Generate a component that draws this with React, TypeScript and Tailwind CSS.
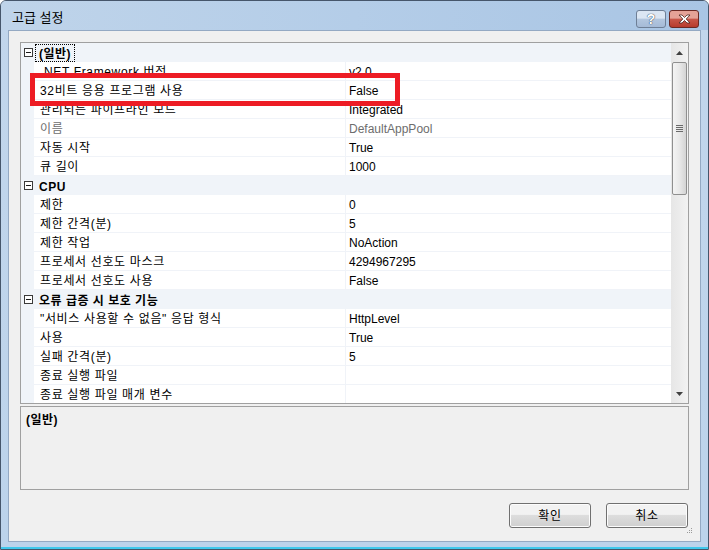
import React from 'react';

type Row =
  | { kind: 'cat'; label: string; focus?: boolean }
  | { kind: 'item'; name: string; value: string; dim?: boolean };

const rows: Row[] = [
  { kind: 'cat', label: '(일반)', focus: true },
  { kind: 'item', name: '.NET Framework 버전', value: 'v2.0' },
  { kind: 'item', name: '32비트 응용 프로그램 사용', value: 'False' },
  { kind: 'item', name: '관리되는 파이프라인 모드', value: 'Integrated' },
  { kind: 'item', name: '이름', value: 'DefaultAppPool', dim: true },
  { kind: 'item', name: '자동 시작', value: 'True' },
  { kind: 'item', name: '큐 길이', value: '1000' },
  { kind: 'cat', label: 'CPU' },
  { kind: 'item', name: '제한', value: '0' },
  { kind: 'item', name: '제한 간격(분)', value: '5' },
  { kind: 'item', name: '제한 작업', value: 'NoAction' },
  { kind: 'item', name: '프로세서 선호도 마스크', value: '4294967295' },
  { kind: 'item', name: '프로세서 선호도 사용', value: 'False' },
  { kind: 'cat', label: '오류 급증 시 보호 기능' },
  { kind: 'item', name: '"서비스 사용할 수 없음" 응답 형식', value: 'HttpLevel' },
  { kind: 'item', name: '사용', value: 'True' },
  { kind: 'item', name: '실패 간격(분)', value: '5' },
  { kind: 'item', name: '종료 실행 파일', value: '' },
  { kind: 'item', name: '종료 실행 파일 매개 변수', value: '' },
];

function Minus() {
  return (
    <span className="w-[9px] h-[9px] border border-[#3b3b3b] bg-white flex items-center justify-center shrink-0">
      <span className="w-[5px] h-px bg-[#1a1a1a]" />
    </span>
  );
}

function GridRow({ row }: { row: Row }) {
  if (row.kind === 'cat') {
    return (
      <div className="h-[19px] shrink-0 flex items-center bg-[#f0f4f9]">
        <div className="w-[13px] flex justify-center pl-[2px]">
          <Minus />
        </div>
        <span
          className={
            'ml-[1px] h-[18px] px-[3px] pt-[1px] leading-[16px] font-bold tracking-[0.5px] border ' +
            (row.focus ? 'border-dotted border-black' : 'border-transparent')
          }
        >
          {row.label}
        </span>
      </div>
    );
  }
  return (
    <div className="h-[19px] shrink-0 flex">
      <div className="w-[13px] bg-[#f0f4f9]" />
      <div className="w-[312px] pl-[6px] pt-[2px] leading-[16px] tracking-[0.65px] border-b border-[#f0f3f8] border-r whitespace-nowrap overflow-hidden">
        <span className={row.dim ? 'text-[#6d6d6d]' : 'text-black'}>{row.name}</span>
      </div>
      <div className="flex-1 pl-[3px] pt-[2px] leading-[16px] border-b border-[#f0f3f8]">
        <span className={row.dim ? 'text-[#6d6d6d]' : 'text-black'}>{row.value}</span>
      </div>
    </div>
  );
}

function ScrollBar() {
  return (
    <div className="w-[17px] bg-gradient-to-r from-[#e6e6e6] to-[#f2f2f2] flex flex-col">
      <div className="h-[19px] flex items-center justify-center">
        <svg width="7" height="4" viewBox="0 0 7 4">
          <path d="M3.5 0 L7 4 L0 4 Z" fill="#404040" />
        </svg>
      </div>
      <div className="h-[133px] mx-[1px] rounded-[2px] border border-[#8f8f8f] bg-gradient-to-r from-[#f4f4f4] via-[#e8e8e8] to-[#d4d4d4] flex flex-col items-center justify-center gap-[1px]">
        <span className="w-[7px] h-px bg-[#6a6a6a]" />
        <span className="w-[7px] h-px bg-[#6a6a6a]" />
        <span className="w-[7px] h-px bg-[#6a6a6a]" />
        <span className="w-[7px] h-px bg-[#6a6a6a]" />
      </div>
      <div className="flex-1" />
      <div className="h-[19px] flex items-center justify-center">
        <svg width="7" height="4" viewBox="0 0 7 4">
          <path d="M0 0 L7 0 L3.5 4 Z" fill="#404040" />
        </svg>
      </div>
    </div>
  );
}

function DlgButton({ label }: { label: string }) {
  return (
    <button className="w-[82px] h-[25px] rounded-[3px] border border-[#707070] bg-gradient-to-b from-[#f2f2f2] from-45% via-[#dddddd] via-50% to-[#cfcfcf] text-[12px] tracking-[0.6px] text-black shadow-[inset_0_0_0_1px_#fcfcfc]">
      {label}
    </button>
  );
}

export default function App() {
  return (
    <div className="w-[709px] h-[550px] bg-white font-['Liberation_Sans','Noto_Sans_CJK_KR',sans-serif] text-[12px] text-black">
      <div className="relative w-full h-full flex flex-col rounded-t-[6px] border border-[#46566b] bg-gradient-to-b from-[#c2d6ec] to-[#bcd3eb] overflow-hidden">
        {/* title bar */}
        <div className="h-[29px] flex items-start justify-between pl-[11px] pr-[9px] bg-gradient-to-r from-[#bfd4ea] via-[#b4cde8] to-[#a9c5e4]">
          <span className="mt-[10px] text-[13px] leading-[14px] text-black">고급 설정</span>
          <div className="mt-[9px] flex gap-[3px]">
            <div className="w-[30px] h-[18px] rounded-[3px] border border-[#6e7f96] bg-gradient-to-b from-[#dbe6f3] from-45% via-[#b3c7df] via-50% to-[#a5bbd7] flex items-center justify-center">
              <span className="text-[14px] font-bold leading-none text-white [text-shadow:0_0_1px_#2d3e55,0_0_1px_#2d3e55]">?</span>
            </div>
            <div className="w-[30px] h-[18px] rounded-[3px] border border-[#6b2a25] bg-gradient-to-b from-[#e5a297] from-45% via-[#c8574a] via-50% to-[#b73b2d] flex items-center justify-center">
              <svg width="13" height="10" viewBox="0 0 13 10">
                <path d="M1 1 L4 1 L6.5 3.5 L9 1 L12 1 L8.2 5 L12 9 L9 9 L6.5 6.5 L4 9 L1 9 L4.8 5 Z" fill="white" stroke="#4a2520" strokeWidth="0.8" />
              </svg>
            </div>
          </div>
        </div>

        {/* body */}
        <div className="mx-[7px] h-[512px] bg-[#f0f0f0] border border-[#94a9c3] p-[11px] flex flex-col">
          <div className="h-[362px] border border-[#a0a0a0] bg-white flex">
            <div className="flex-1 flex flex-col overflow-hidden">
              {rows.map((r, i) => (
                <GridRow key={i} row={r} />
              ))}
            </div>
            <ScrollBar />
          </div>

          <div className="mt-[2px] h-[85px] border border-[#a0a0a0] bg-[#f0f0f0] px-[5px] pt-[4px]">
            <span className="font-bold tracking-[0.5px]">(일반)</span>
          </div>

          <div className="mt-[13px] flex justify-end gap-[15px] pr-[1px]">
            <DlgButton label="확인" />
            <DlgButton label="취소" />
          </div>

          <div className="flex-1 flex justify-end items-end">
            <svg width="6" height="6" viewBox="0 0 6 6" className="mb-[-4px] mr-[-4px]">
              <rect x="4" y="0" width="1" height="1" fill="#9a9a9a" />
              <rect x="2" y="2" width="1" height="1" fill="#9a9a9a" />
              <rect x="4" y="2" width="1" height="1" fill="#9a9a9a" />
              <rect x="0" y="4" width="1" height="1" fill="#9a9a9a" />
              <rect x="2" y="4" width="1" height="1" fill="#9a9a9a" />
              <rect x="4" y="4" width="1" height="1" fill="#9a9a9a" />
            </svg>
          </div>
        </div>
        <div className="flex-1 border-b-2 border-[#3fc8ec]" />

        {/* red highlight */}
        <div className="absolute left-[29px] top-[72px] w-[370px] h-[33px] border-[5px] border-[#ed1c24]" />
      </div>
    </div>
  );
}
